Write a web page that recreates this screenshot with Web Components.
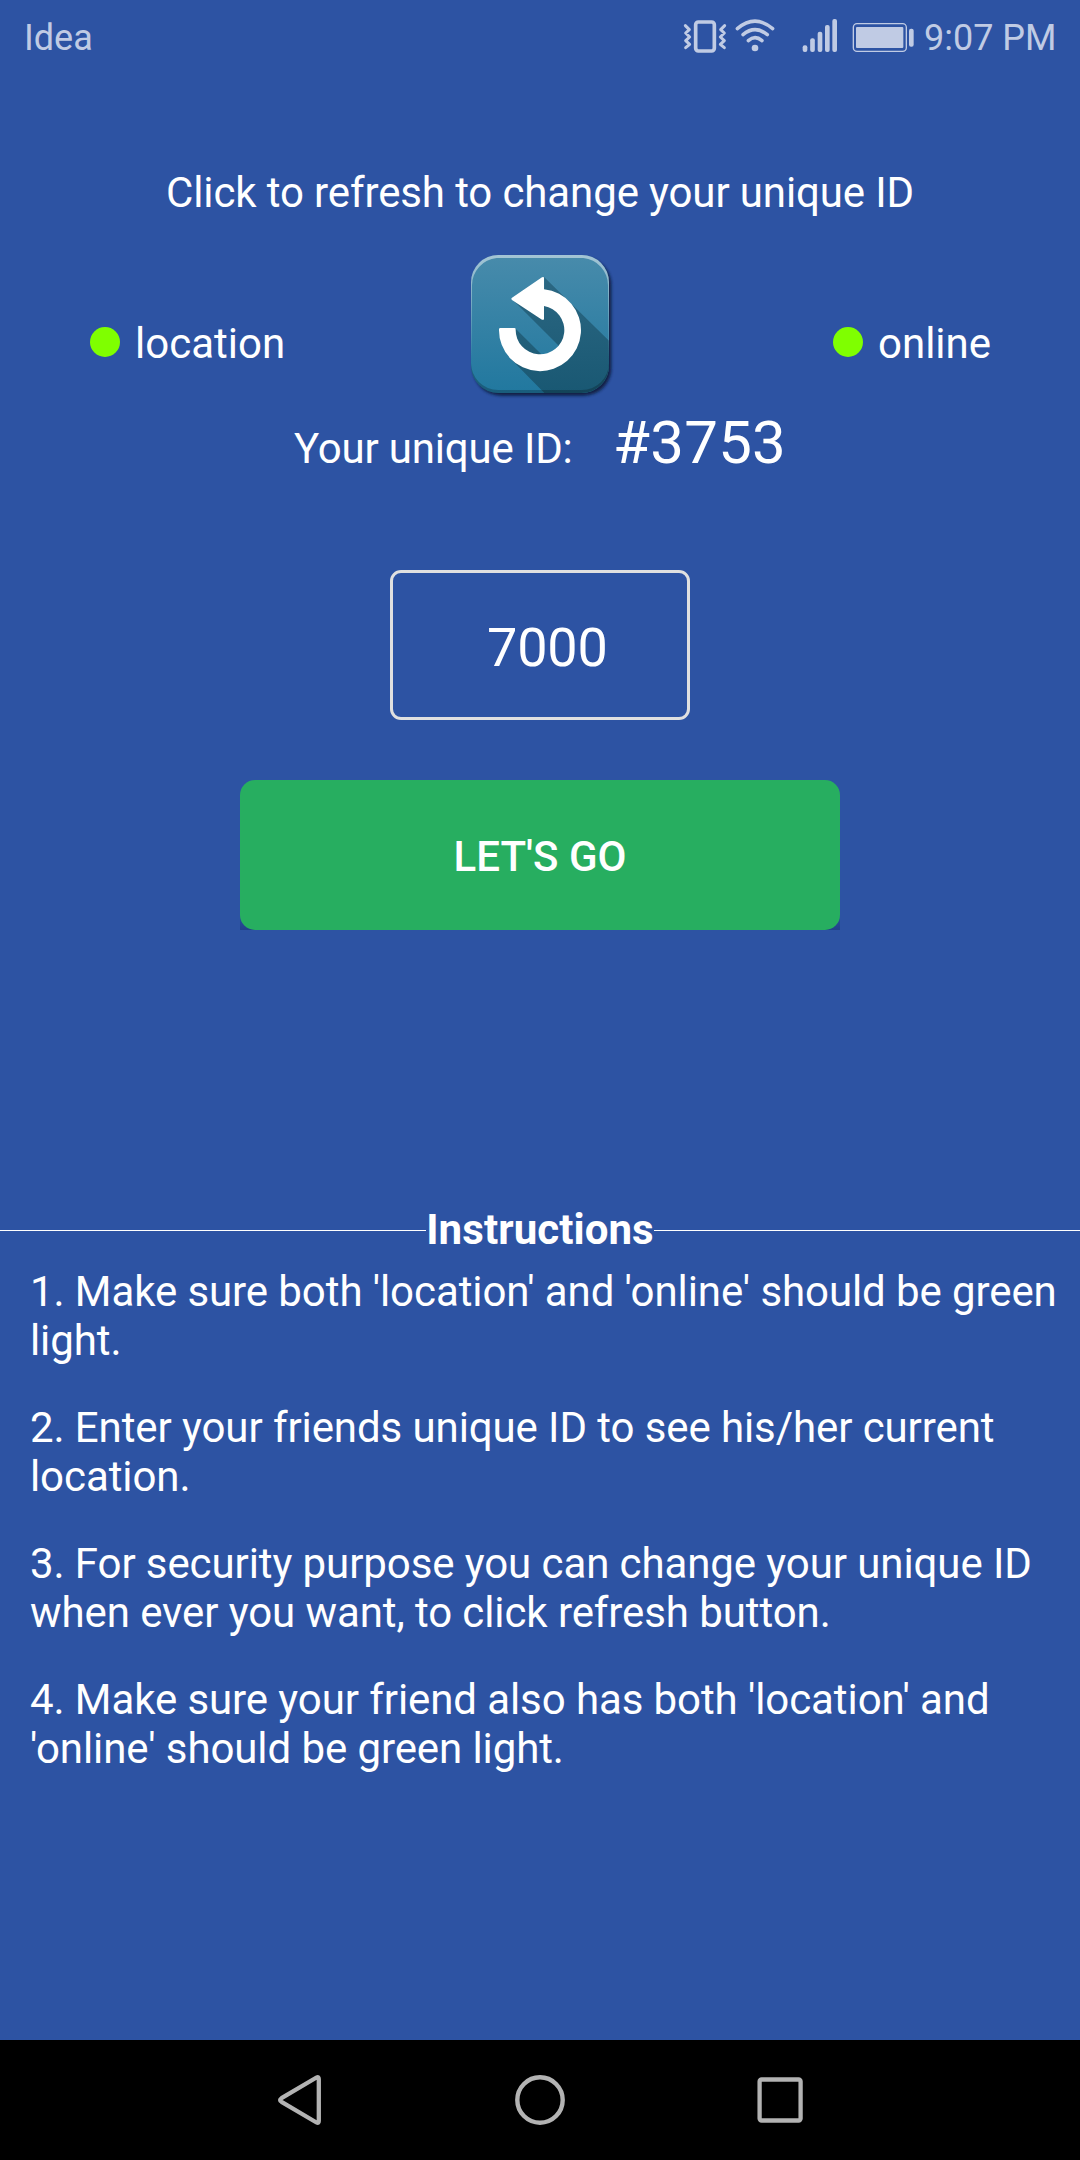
<!DOCTYPE html>
<html lang="en">
<head>
<meta charset="utf-8">
<title>Unique ID</title>
<style>
html,body{margin:0;padding:0}
body{width:1080px;height:2160px;overflow:hidden;background:#2d53a3;font-family:Roboto,sans-serif;color:#fff}
</style>
</head>
<body>
<app-screen></app-screen>
<script>
const define = (name, html) => {
  const t = document.createElement('template');
  t.innerHTML = html;
  customElements.define(name, class extends HTMLElement {
    constructor() {
      super();
      this.attachShadow({mode: 'open'}).appendChild(t.content.cloneNode(true));
    }
  });
};

define('status-bar', `
<style>
:host{display:flex;height:80px;box-sizing:border-box;color:#c0cbe4;font-size:36px;line-height:42px}
span{padding-top:17px;white-space:nowrap}
.carrier{padding-left:24px;width:656px}
.time{padding-left:4px}
svg{display:block;flex:none}
</style>
<span class="carrier"><slot name="carrier"></slot></span>
<svg width="240" height="80" viewBox="60 0 720 240" fill="none" stroke="currentColor" stroke-linecap="round" stroke-linejoin="round">
  <rect x="107" y="66" width="56" height="87" rx="8" stroke-width="11"/>
  <path stroke-width="9" d="M76 77l12 12-11 10 12 12-12 11 12 11-12 10M194 77l-12 12 11 10-12 12 12 11-12 11 12 10"/>
  <path stroke-width="10.5" d="M232 86Q285 41 338 86M249 104Q285 74 322 104M265 122Q285 104 306 122"/>
  <g fill="currentColor" stroke="none">
    <circle cx="285" cy="144" r="10"/>
    <rect x="428" y="136" width="14" height="20" rx="6"/>
    <rect x="450.500" y="115" width="14" height="41" rx="6"/>
    <rect x="473" y="95" width="14" height="61" rx="6"/>
    <rect x="495" y="75" width="14" height="81" rx="6"/>
    <rect x="517" y="57" width="14" height="99" rx="6"/>
    <rect x="588" y="81" width="142" height="63" rx="3"/>
    <rect x="747" y="86" width="14" height="54" rx="6"/>
  </g>
  <rect x="580" y="71" width="159" height="83" rx="11" stroke-width="4"/>
</svg>
<span class="time"><slot name="time"></slot></span>`);

define('status-light', `
<style>
:host{display:flex;gap:15px;align-items:flex-start;font-size:42px;line-height:49px}
i{width:30px;height:30px;border-radius:50%;background:#7fff00;margin-top:8px;flex:none}
</style><i></i><span><slot></slot></span>`);

define('refresh-button', `
<style>:host{display:block;width:180px;height:165px}svg{display:block}</style>
<svg width="180" height="165" viewBox="0 0 540 495">
  <defs>
    <linearGradient id="g" x1="0" y1="0" x2="0" y2="1"><stop offset="0" stop-color="#488bab"/><stop offset="1" stop-color="#21789f"/></linearGradient>
    <linearGradient id="d" x1="0" y1="45" x2="0" y2="459" gradientUnits="userSpaceOnUse"><stop offset="0" stop-color="#2f6a85"/><stop offset="1" stop-color="#195873"/></linearGradient>
    <linearGradient id="h" x1="0" y1="45" x2="0" y2="459" gradientUnits="userSpaceOnUse"><stop offset="0" stop-color="#fff" stop-opacity=".5"/><stop offset=".2" stop-color="#fff" stop-opacity=".4"/><stop offset=".75" stop-color="#fff" stop-opacity="0"/></linearGradient>
    <clipPath id="c"><rect x="63" y="45" width="414" height="414" rx="82"/></clipPath>
    <filter id="b" x="-10%" y="-10%" width="120%" height="120%"><feGaussianBlur stdDeviation="5"/></filter>
  </defs>
  <rect x="70" y="53" width="414" height="414" rx="82" fill="#091936" opacity=".85" filter="url(#b)"/>
  <g clip-path="url(#c)">
    <rect x="63" y="45" width="414" height="414" fill="url(#g)"/>
    <g fill="url(#d)">
      <path d="M283 112L477 302V460H284L182 356L201 339A98 98 0 0 0 339 201L283 150Z"/>
      <path d="M185 176L330 321A80 80 0 0 0 283 191V112Z"/>
      <path d="M197 266L280 349A80 80 0 0 1 190 270Z"/>
    </g>
    <path fill="#000" opacity=".22" d="M63 367A82 82 0 0 0 145 450H395A82 82 0 0 0 477 367V459H63Z"/>
    <path fill="url(#h)" fill-rule="evenodd" d="M63 45H477V459H474V136A82 82 0 0 0 400 54H140A82 82 0 0 0 66 136V459H63Z"/>
  </g>
  <path fill="#fff" d="M147 268q0-4 4-4H193q4 0 4 4A73 73 0 1 0 282 198V236q0 5-6 3L186 180q-4-4 0-7L276 112q6-3 6 2V148A123 123 0 1 1 147 268Z"/>
</svg>`);

define('id-row', `
<style>
:host{display:flex;align-items:baseline;height:70px;padding-left:294px;line-height:70px;font-size:42px;white-space:nowrap}
.label{width:319px;letter-spacing:-.17px}
.value{font-size:60px;letter-spacing:.25px}
</style><span class="label"><slot></slot></span><span class="value"><slot name="value"></slot></span>`);

define('id-field', `
<style>
:host{display:block;box-sizing:border-box;width:300px;height:150px;border:3px solid #e0e0e0;border-radius:11px;padding:43px 0 0 94px;font-size:54px;line-height:63px;letter-spacing:-.2px}
</style><slot></slot>`);

define('go-button', `
<style>
:host{display:block;width:600px;height:150px;background:linear-gradient(transparent 88%,rgba(10,20,80,.3))}
div{display:flex;align-items:center;justify-content:center;height:100%;box-sizing:border-box;padding-top:2px;border-radius:15px;background:#27ae60;font-weight:500;font-size:42px;line-height:49px}
</style><div><slot></slot></div>`);

define('section-divider', `
<style>
:host{display:flex;align-items:center;font-weight:700;font-size:42px;line-height:49px;letter-spacing:.08px}
i{flex:1;height:1px;background:#fff;margin-top:2px}
</style><i></i><span><slot></slot></span><i></i>`);

define('instruction-item', `
<style>:host{display:block;font-size:42px;line-height:49px;white-space:nowrap;letter-spacing:-.09px}</style><slot></slot>`);

define('nav-bar', `
<style>
:host{display:flex;height:120px;background:#000;justify-content:center;align-items:center;gap:180px}
svg{display:block}
</style>
<svg width="60" height="60" viewBox="0 0 60 60" fill="none" stroke="#b3b3b3" stroke-width="4.300" stroke-linejoin="round"><path d="M46.500 7.500Q48.800 6.200 48.800 9V51Q48.800 53.800 46.500 52.500L11.500 31.800Q8.700 30 11.500 28.200Z"/></svg>
<svg width="60" height="60" viewBox="0 0 60 60" fill="none" stroke="#b3b3b3" stroke-width="4.400"><circle cx="30" cy="30" r="22.700"/></svg>
<svg width="60" height="60" viewBox="0 0 60 60" fill="none" stroke="#b3b3b3" stroke-width="4.300"><rect x="9.600" y="9.500" width="41" height="41" rx="2"/></svg>`);

define('app-screen', `
<style>
:host{display:flex;flex-direction:column;width:1080px;height:2160px}
main{flex:1;display:flex;flex-direction:column;padding-top:88px}
.title{font-size:42px;line-height:49px;text-align:center;letter-spacing:-.12px}
.row{display:flex;align-items:flex-start;margin-top:23px;height:165px}
.row status-light{padding-top:79px}
.loc{width:450px;padding-left:90px;box-sizing:border-box}
.on{margin-left:203px}
id-row{margin-top:3px}
id-field{align-self:center;margin-top:92px}
go-button{align-self:center;margin-top:60px}
section-divider{margin-top:275px}
.list{display:flex;flex-direction:column;gap:38px;padding-left:30px;margin-top:13px}
</style>
<status-bar><span slot="carrier">Idea</span><span slot="time">9:07 PM</span></status-bar>
<main>
  <div class="title">Click to refresh to change your unique ID</div>
  <div class="row">
    <status-light class="loc">location</status-light>
    <refresh-button></refresh-button>
    <status-light class="on">online</status-light>
  </div>
  <id-row>Your unique ID:<span slot="value">#3753</span></id-row>
  <id-field>7000</id-field>
  <go-button>LET'S GO</go-button>
  <section-divider>Instructions</section-divider>
  <div class="list">
    <instruction-item>1. Make sure both 'location' and 'online' should be green<br>light.</instruction-item>
    <instruction-item>2. Enter your friends unique ID to see his/her current<br>location.</instruction-item>
    <instruction-item>3. For security purpose you can change your unique ID<br>when ever you want, to click refresh button.</instruction-item>
    <instruction-item>4. Make sure your friend also has both 'location' and<br>'online' should be green light.</instruction-item>
  </div>
</main>
<nav-bar></nav-bar>`);
</script>
</body>
</html>
